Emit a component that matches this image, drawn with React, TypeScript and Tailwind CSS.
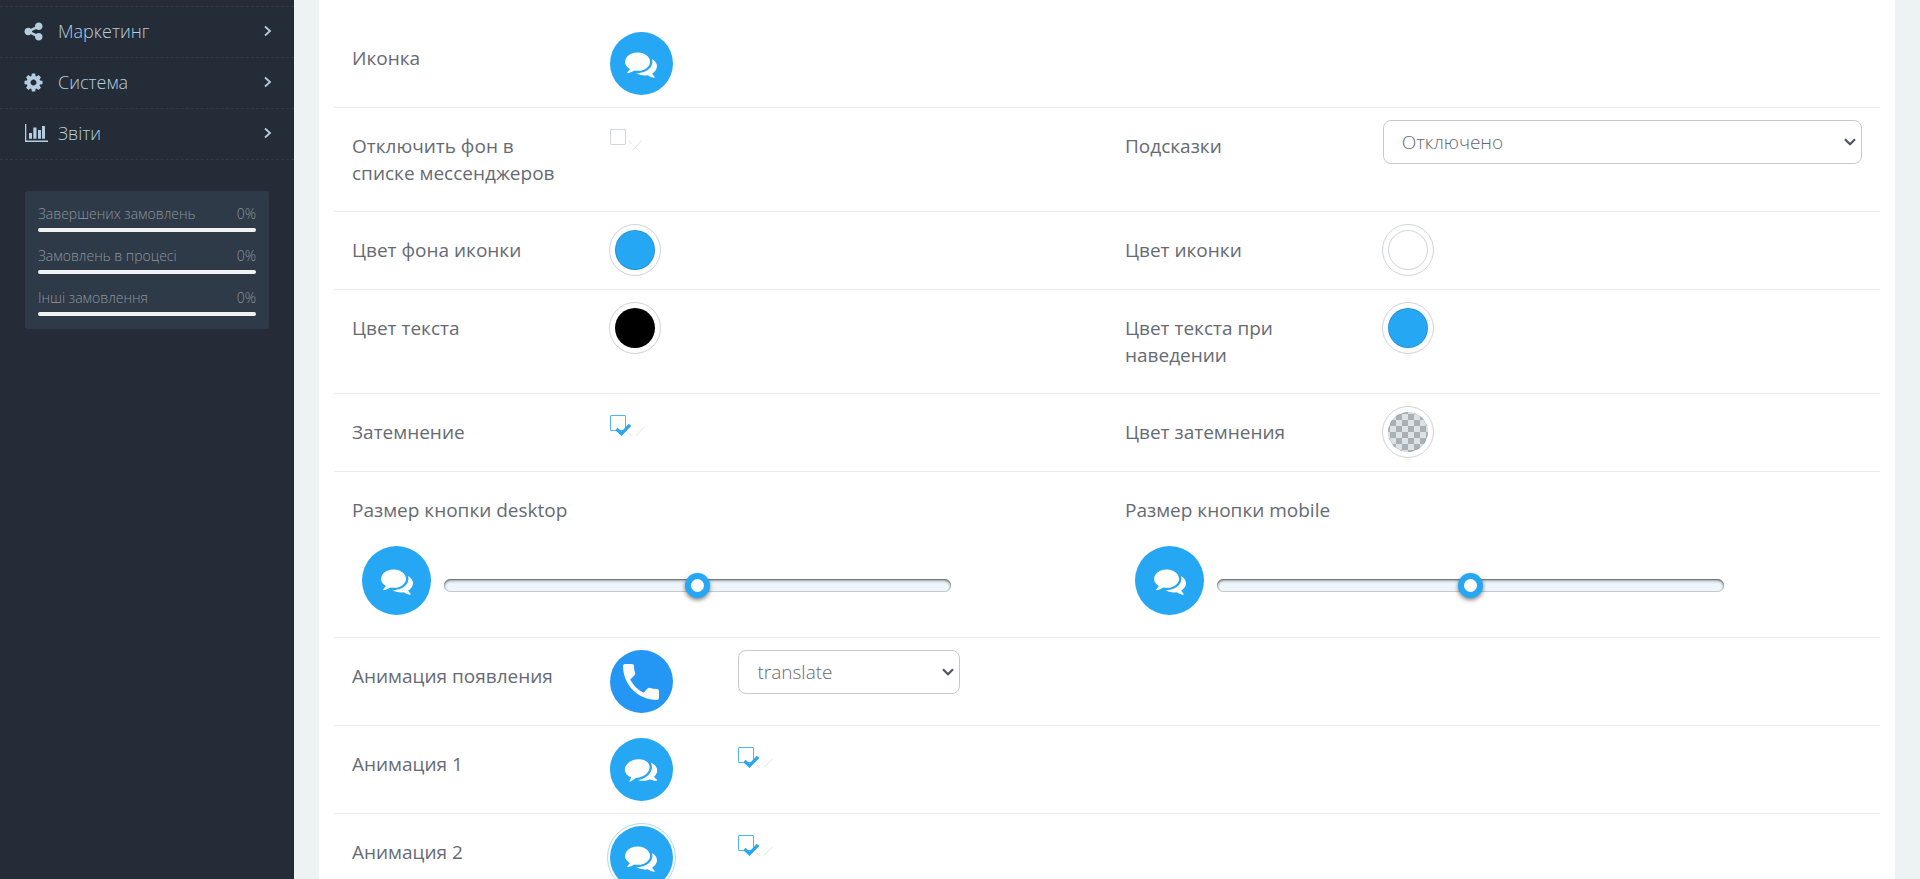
import type { ReactNode } from 'react'
import clsx from 'clsx'

const menu = [
  { title: 'Маркетинг', icon: <ShareIcon /> },
  { title: 'Система', icon: <CogIcon /> },
  { title: 'Звіти', icon: <ChartIcon /> }
]

const stats = [
  { title: 'Завершених замовлень', value: 0 },
  { title: 'Замовлень в процесі', value: 0 },
  { title: 'Інші замовлення', value: 0 }
]

function ShareIcon() {
  return (
    <svg className="h-[21px] w-[21px]" viewBox="0 0 1792 1792" fill="currentColor">
      <path d="M1344 1024q133 0 226.5 93.5t93.5 226.5-93.5 226.5-226.5 93.5-226.5-93.5-93.5-226.5q0-12 2-34l-360-180q-92 86-218 86-133 0-226.5-93.5t-93.5-226.5 93.5-226.5 226.5-93.5q126 0 218 86l360-180q-2-22-2-34 0-133 93.5-226.5t226.5-93.5 226.5 93.5 93.5 226.5-93.5 226.5-226.5 93.5q-126 0-218-86l-360 180q2 22 2 34t-2 34l360 180q92-86 218-86z" />
    </svg>
  )
}

function CogIcon() {
  return (
    <svg className="h-[21px] w-[21px]" viewBox="0 0 1792 1792" fill="currentColor">
      <path d="M1152 896q0-106-75-181t-181-75-181 75-75 181 75 181 181 75 181-75 75-181zm512-109v222q0 12-8 23t-20 13l-185 28q-19 54-39 91 35 50 107 138 10 12 10 25t-9 23q-27 37-99 108t-94 71q-12 0-26-9l-138-108q-44 23-91 38-16 136-29 186-7 28-36 28h-222q-14 0-24.5-8.5t-11.5-21.5l-28-184q-49-16-90-37l-141 107q-10 9-25 9-14 0-25-11-126-114-165-168-7-10-7-23 0-12 8-23 15-21 51-66.5t54-70.5q-27-50-41-99l-183-27q-13-2-21-12.5t-8-23.5v-222q0-12 8-23t19-13l186-28q14-46 39-92-40-57-107-138-10-12-10-24 0-10 9-23 26-36 98.5-107.5t94.5-71.5q13 0 26 10l138 107q44-23 91-38 16-136 29-186 7-28 36-28h222q14 0 24.5 8.5t11.5 21.5l28 184q49 16 90 37l142-107q9-9 24-9 13 0 25 10 129 119 165 170 7 8 7 22 0 12-8 23-15 21-51 66.5t-54 70.5q26 50 41 98l183 28q13 2 21 12.5t8 23.5z" />
    </svg>
  )
}

function ChartIcon() {
  return (
    <svg className="ml-[2px] h-[18px] w-[23px]" viewBox="0 0 23 18" fill="currentColor">
      <path d="M0 0h1.3v16.4H23V18H0zM4 9h3v5.8H4zM8.3 3.5h3.2v11.3H8.3zM13 6h3v8.8h-3zM17 2h3v12.8h-3z" />
    </svg>
  )
}

function CommentsIcon({ className }: { className: string }) {
  return (
    <svg className={className} viewBox="0 0 1792 1792" fill="currentColor">
      <path d="M1408 768q0 139-94 257t-256.5 186.5-353.5 68.5q-86 0-176-16-124 88-278 128-36 9-86 16h-3q-11 0-20.5-8t-11.5-21q-1-3-1-6.5t.5-6.5 2-6l2.5-5t3.5-5.5 4-5 4.5-5 4-4.5q5-6 23-25t26-29.5 22.5-29 25-38.5 20.5-44q-124-72-195-177t-71-224q0-139 94-257t256.5-186.5 353.5-68.5 353.5 68.5 256.5 186.5 94 257zm384 256q0 120-71 224.5t-195 176.5q10 24 20.5 44t25 38.5 22.5 29 26 29.5 23 25q1 1 4 4.5t4.5 5 4 5 3.5 5.5l2.5 5t2 6 .5 6.5-1 6.5q-3 14-13 22t-22 7q-50-7-86-16-154-40-278-128-90 16-176 16-271 0-472-132 58 4 88 4 161 0 309-45t264-129q125-92 192-212t67-254q0-77-23-152 129 71 204 178t75 230z" />
    </svg>
  )
}

function ChatButton({ ring, tilt }: { ring?: boolean; tilt?: boolean }) {
  return (
    <button
      type="button"
      aria-label="Чат"
      className={clsx(
        'flex h-[63px] w-[63px] items-center justify-center rounded-full bg-[#25a7f3] text-white',
        ring && 'outline outline-offset-2 outline-[#a5dafa]'
      )}
    >
      <CommentsIcon className={clsx('h-8 w-8', tilt && '-rotate-12')} />
    </button>
  )
}

function Row({ children }: { children: ReactNode }) {
  return <div className="grid grid-cols-2 border-b border-[#ebebeb] py-3">{children}</div>
}

function Field({ id, title, children }: { id?: string; title: string; children?: ReactNode }) {
  return (
    <div className="grid grid-cols-6">
      <label htmlFor={id} className="col-span-2 px-[18px] pt-[13px] pb-3">{title}</label>
      {children}
    </div>
  )
}

function Check({ id, checked }: { id: string; checked?: boolean }) {
  return (
    <div className="relative h-8 w-10 pt-[9px]">
      <input
        id={id}
        type="checkbox"
        defaultChecked={checked}
        className="peer block h-4 w-4 appearance-none rounded-[1px] border border-[#d3d6de] checked:border-[#4fb5f5]"
      />
      <svg className="pointer-events-none absolute top-5 left-[18px] h-[11px] w-4 text-[#dfe2e6] peer-checked:hidden" viewBox="0 0 16 11" fill="none" stroke="currentColor">
        <path d="M1 1 4 4.500M13.500.5 7 7.500M4.500 10 7.500 7.500 10 10" strokeWidth="1" />
      </svg>
      <svg className="pointer-events-none absolute top-[17px] left-[5px] hidden h-[14px] w-[31px] peer-checked:block" viewBox="0 0 31 14" fill="none">
        <path d="M1.500 6 6.500 10.800 15 1.800" stroke="#25a7f3" strokeWidth="3.200" />
        <path d="M13 9.500 17 13.500M21 12.500 30 3.500" stroke="#e2e2e2" />
      </svg>
    </div>
  )
}

function Swatch({ id, color }: { id: string; color: string }) {
  return (
    <div className="col-span-4 px-[17px]">
      <input
        id={id}
        type="color"
        defaultValue={color}
        className={clsx(
          'mb-px block h-[52px] w-[52px] appearance-none rounded-full border border-[#d0d3d8] p-[5px]',
          '[&::-webkit-color-swatch-wrapper]:p-0 [&::-webkit-color-swatch]:rounded-full [&::-webkit-color-swatch]:border',
          color === '#ffffff' ? '[&::-webkit-color-swatch]:border-[#cfd2d8]' : '[&::-webkit-color-swatch]:border-black/10'
        )}
      />
    </div>
  )
}

function Select({ id, value }: { id: string; value: string }) {
  return (
    <div className="relative">
      <select
        id={id}
        className="h-11 w-full appearance-none rounded-lg border border-[#c8c9cc] bg-white px-[18px] pt-px font-light"
      >
        <option>{value}</option>
      </select>
      <svg className="pointer-events-none absolute top-[18px] right-[6px] h-2 w-3 text-[#4f5364]" viewBox="0 0 12 8" fill="none" stroke="currentColor">
        <path d="M1 1.200 6 6.200 11 1.200" strokeWidth="2.200" />
      </svg>
    </div>
  )
}

function SizeField({ id, title }: { id: string; title: string }) {
  return (
    <div>
      <label htmlFor={id} className="block px-[18px] pt-[13px] pb-3">{title}</label>
      <div className="mt-[10px] mb-[10px] flex items-center pl-7">
        <div className="flex h-[69px] w-[69px] items-center justify-center rounded-full bg-[#25a7f3] text-white">
          <CommentsIcon className="h-8 w-8" />
        </div>
        <input
          id={id}
          type="range"
          defaultValue={50}
          className={clsx(
            'mt-[9px] mr-[21%] ml-[13px] h-[13px] flex-1 appearance-none rounded-full bg-[#eef6fc]',
            'shadow-[inset_0_1px_1px_#707678,inset_0_2px_3px_#9ba3a6,inset_0_0_0_1px_#c8cccf]',
            '[&::-webkit-slider-thumb]:h-[25px] [&::-webkit-slider-thumb]:w-[25px] [&::-webkit-slider-thumb]:appearance-none',
            '[&::-webkit-slider-thumb]:rounded-full [&::-webkit-slider-thumb]:border-6 [&::-webkit-slider-thumb]:border-[#25a7f3]',
            '[&::-webkit-slider-thumb]:bg-white [&::-webkit-slider-thumb]:shadow-[0_2px_4px_rgba(0,0,0,0.5)]'
          )}
        />
      </div>
    </div>
  )
}

function Sidebar() {
  return (
    <aside className="w-[294px] shrink-0 bg-[#252c38] pt-[6px] font-light">
      <nav className="border-t border-dashed border-[#303d49] bg-[#242d37] text-[18px] leading-[48px] text-[#b4cde0]">
        {menu.map((item) => (
          <a key={item.title} href="#" className="flex items-center border-b border-dashed border-[#303d49] pr-[22px] pb-[2px] pl-[23px]">
            <span className="w-[35px]">{item.icon}</span>
            <span className="flex-1">{item.title}</span>
            <svg className="h-3 w-2" viewBox="0 0 8 12" fill="none" stroke="currentColor" strokeWidth="1.800">
              <path d="M1 1.500 6 6 1 10.500" />
            </svg>
          </a>
        ))}
      </nav>
      <div className="mx-[25px] mt-[31px] rounded-[3px] bg-[#2e3a47] px-[13px] pt-3 pb-[13px] text-[14px] leading-[22px] text-[#8d959e]">
        {stats.map((stat) => (
          <div key={stat.title} className="pb-[13px] last:pb-0">
            <div className="flex justify-between">
              <span>{stat.title}</span>
              <span>{stat.value}%</span>
            </div>
            <div className="mt-[3px] h-1 rounded-sm bg-[#eff1f2]">
              <div className="h-full rounded-sm bg-[#25a7f3]" style={{ width: `${stat.value}%` }} />
            </div>
          </div>
        ))}
      </div>
    </aside>
  )
}

export default function App() {
  return (
    <div className="flex h-screen overflow-hidden bg-[#edf3f3] font-['Open_Sans',sans-serif] text-[19px] leading-[27px] text-[#666a73]">
      <Sidebar />
      <main className="flex-1 px-[25px]">
        <div className="bg-white px-[15px] pt-5">
          <Row>
            <Field title="Иконка">
              <div className="col-span-4 px-[18px]"><ChatButton /></div>
            </Field>
          </Row>

          <Row>
            <Field id="no-bg" title="Отключить фон в списке мессенджеров">
              <div className="col-span-4 px-[18px]"><Check id="no-bg" /></div>
            </Field>
            <Field id="hints" title="Подсказки">
              <div className="col-span-4 px-[18px]"><Select id="hints" value="Отключено" /></div>
            </Field>
          </Row>

          <Row>
            <Field id="icon-bg" title="Цвет фона иконки"><Swatch id="icon-bg" color="#25a7f3" /></Field>
            <Field id="icon-color" title="Цвет иконки"><Swatch id="icon-color" color="#ffffff" /></Field>
          </Row>

          <Row>
            <Field id="text-color" title="Цвет текста"><Swatch id="text-color" color="#000000" /></Field>
            <Field id="text-hover" title="Цвет текста при наведении"><Swatch id="text-hover" color="#25a7f3" /></Field>
          </Row>

          <Row>
            <Field id="shade" title="Затемнение">
              <div className="col-span-4 px-[18px]"><Check id="shade" checked /></div>
            </Field>
            <Field id="shade-color" title="Цвет затемнения">
              <div className="col-span-4 px-[17px]">
                {/* half transparent colour over a checkerboard */}
                <button id="shade-color" type="button" className="mb-px block h-[52px] w-[52px] rounded-full border border-[#d0d3d8] p-[5px]">
                  <span className="block h-full rounded-full border border-black/5 bg-[repeating-conic-gradient(#a8b1b5_0%_25%,#dfe2e4_0%_50%)] bg-size-[12px_12px] bg-center" />
                </button>
              </div>
            </Field>
          </Row>

          <Row>
            <SizeField id="size-desktop" title="Размер кнопки desktop" />
            <SizeField id="size-mobile" title="Размер кнопки mobile" />
          </Row>

          <Row>
            <Field id="appear" title="Анимация появления">
              <div className="px-[18px]">
                <button type="button" aria-label="Звонок" className="flex h-[63px] w-[63px] items-center justify-center rounded-full bg-[#2496f3] text-[#fafafa]">
                  <svg className="h-12 w-12" viewBox="0 0 24 24" fill="currentColor">
                    <path d="M6.620 10.790c1.440 2.830 3.760 5.140 6.590 6.590l2.200-2.200c.27-.27.67-.36 1.020-.24 1.120.37 2.330.57 3.570.57.55 0 1 .45 1 1V20c0 .55-.45 1-1 1-9.390 0-17-7.610-17-17 0-.55.45-1 1-1h3.500c.55 0 1 .45 1 1 0 1.250.2 2.450.57 3.570.11.35.03.74-.25 1.020l-2.200 2.200z" />
                  </svg>
                </button>
              </div>
              <div className="col-span-2 px-[18px]"><Select id="appear" value="translate" /></div>
            </Field>
          </Row>

          <Row>
            <Field id="anim-1" title="Анимация 1">
              <div className="px-[18px]"><ChatButton tilt /></div>
              <div className="col-span-2 px-[18px]"><Check id="anim-1" checked /></div>
            </Field>
          </Row>

          <Row>
            <Field id="anim-2" title="Анимация 2">
              <div className="px-[18px]"><ChatButton ring /></div>
              <div className="col-span-2 px-[18px]"><Check id="anim-2" checked /></div>
            </Field>
          </Row>
        </div>
      </main>
    </div>
  )
}
